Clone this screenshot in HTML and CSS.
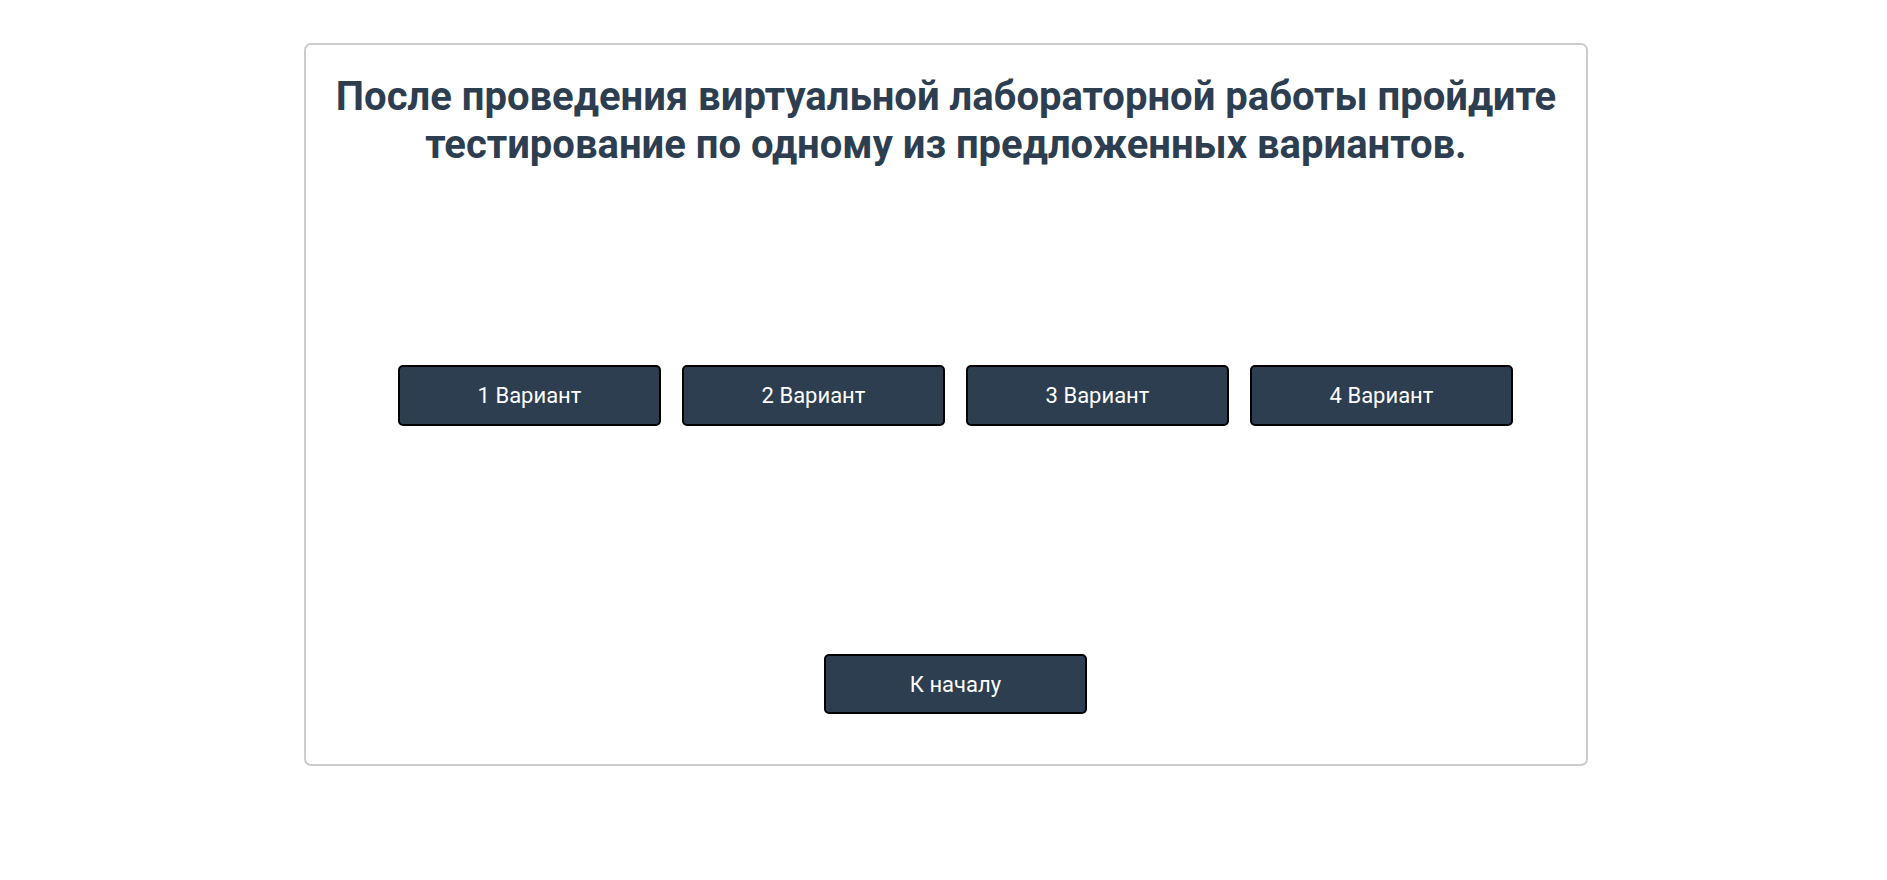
FILE: index.html
```html
<!DOCTYPE html>
<html lang="ru">
<head>
<meta charset="utf-8">
<title>Тестирование</title>
<link rel="stylesheet" href="styles.css">
</head>
<body>
<div class="card">
  <h1 class="title">После проведения виртуальной лабораторной работы пройдите тестирование по одному из предложенных вариантов.</h1>
  <div class="variants">
    <button class="btn">1 Вариант</button>
    <button class="btn">2 Вариант</button>
    <button class="btn">3 Вариант</button>
    <button class="btn">4 Вариант</button>
  </div>
  <div class="back">
    <button class="btn">К началу</button>
  </div>
</div>
</body>
</html>
```

FILE: styles.css
```css
html, body {
  margin: 0;
  background: #ffffff;
}
body {
  padding: 43px 0 0 5px;
  font-family: Roboto, "Noto Sans", sans-serif;
}
.card {
  box-sizing: border-box;
  width: 1284px;
  height: 723px;
  margin: 0 auto;
  border: 2px solid #cccccc;
  border-radius: 7px;
  padding: 28px 20px 0;
  display: flex;
  flex-direction: column;
}
.title {
  margin: 0;
  font-size: 40px;
  line-height: 48px;
  font-weight: 700;
  color: #2c3e50;
  text-align: center;
}
.variants {
  display: flex;
  justify-content: center;
  gap: 21px;
  margin-top: 196px;
  padding-left: 19px;
}
.back {
  display: flex;
  justify-content: center;
  margin-top: 228px;
  padding-left: 19px;
}
.btn {
  box-sizing: border-box;
  width: 263px;
  height: 61px;
  background: #2c3e50;
  color: #ffffff;
  border: 2px solid #000000;
  border-radius: 5px;
  font-family: Roboto, "Noto Sans", sans-serif;
  font-size: 22px;
  padding: 0;
  cursor: pointer;
}
.back .btn {
  height: 60px;
}
```
